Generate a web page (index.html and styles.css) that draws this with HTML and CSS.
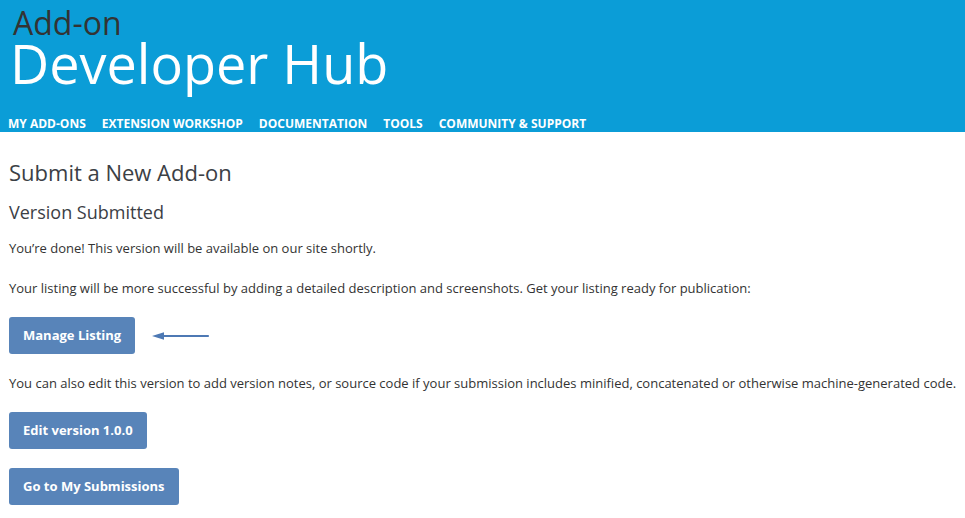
FILE: index.html
```html
<!DOCTYPE html>
<html lang="en">
<head>
<meta charset="utf-8">
<title>Submit a New Add-on</title>
<link rel="stylesheet" href="styles.css">
</head>
<body>
<header class="masthead">
  <div class="brand">
    <div class="brand-small">Add-on</div>
    <div class="brand-big">Developer Hub</div>
  </div>
  <nav class="nav">
    <a href="#">My Add-ons</a>
    <a href="#">Extension Workshop</a>
    <a href="#">Documentation</a>
    <a href="#">Tools</a>
    <a href="#">Community &amp; Support</a>
  </nav>
</header>
<main class="content">
  <h1 class="title">Submit a New Add-on</h1>
  <h2 class="subtitle">Version Submitted</h2>
  <p class="text">You’re done! This version will be available on our site shortly.</p>
  <p class="text">Your listing will be more successful by adding a detailed description and screenshots. Get your listing ready for publication:</p>
  <div class="row">
    <a class="button" href="#">Manage Listing</a>
    <svg class="arrow" width="60" height="10" viewBox="0 0 60 10"><path d="M12 5 H57" stroke="#4d79b4" stroke-width="2.2" stroke-linecap="round"/><path d="M1 5 L13 1.2 L13 8.8 Z" fill="#4d79b4"/></svg>
  </div>
  <p class="text">You can also edit this version to add version notes, or source code if your submission includes minified, concatenated or otherwise machine-generated code.</p>
  <div class="row">
    <a class="button" href="#">Edit version 1.0.0</a>
  </div>
  <div class="row">
    <a class="button" href="#">Go to My Submissions</a>
  </div>
</main>
</body>
</html>
```
FILE: styles.css
```css
html, body {
  margin: 0;
  padding: 0;
  background: #ffffff;
}
body {
  font-family: "Open Sans", "Liberation Sans", sans-serif;
  color: #333333;
}
.masthead {
  background: #0b9dd7;
  height: 132px;
  box-sizing: border-box;
  padding-top: 8px;
  display: flex;
  flex-direction: column;
}
.brand {
  padding-left: 10px;
}
.brand-small {
  padding-left: 3px;
  font-size: 32px;
  line-height: 30px;
  color: #333333;
}
.brand-big {
  font-size: 54px;
  line-height: 50px;
  color: #ffffff;
}
.nav {
  margin-top: auto;
  padding: 0 0 0 8px;
  display: flex;
  gap: 16px;
  line-height: 16px;
}
.nav a {
  color: #ffffff;
  font-weight: 700;
  font-size: 12px;
  text-transform: uppercase;
  text-decoration: none;
}
.content {
  padding: 25px 0 0 9px;
  display: flex;
  flex-direction: column;
}
.title {
  margin: 0;
  font-size: 22px;
  line-height: 30px;
  font-weight: 400;
  color: #3b4045;
}
.subtitle {
  margin: 13px 0 0;
  font-size: 18px;
  line-height: 24px;
  font-weight: 400;
  color: #3b4045;
}
.text {
  margin: 14px 0 0;
  font-size: 13px;
  line-height: 20px;
}
.text + .text {
  margin-top: 20px;
}
.row {
  margin-top: 19px;
  display: flex;
  align-items: center;
}
.row + .text {
  margin-top: 19px;
}
.button {
  display: inline-block;
  background: #5884b9;
  color: #ffffff;
  font-weight: 700;
  font-size: 13px;
  line-height: 37px;
  height: 37px;
  padding: 0 14px;
  border-radius: 3px;
  text-decoration: none;
}
.arrow {
  margin-left: 16px;
}
```
